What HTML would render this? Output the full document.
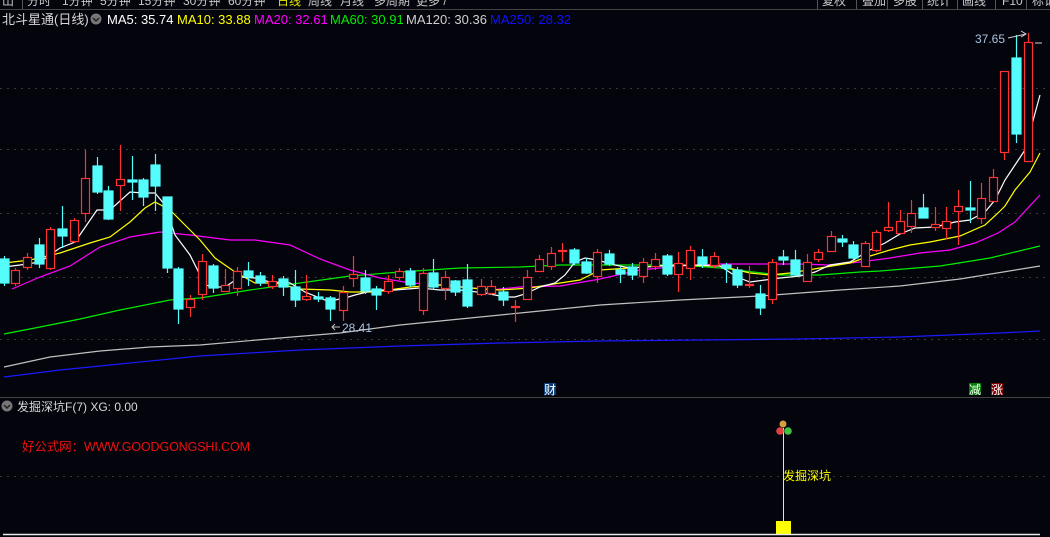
<!DOCTYPE html>
<html><head><meta charset="utf-8"><style>
html,body{margin:0;padding:0;background:#04040c;width:1050px;height:537px;overflow:hidden}
svg{display:block}
text{font-family:"Liberation Sans","Noto Sans CJK SC",sans-serif}
</style></head><body>
<svg width="1050" height="537" viewBox="0 0 1050 537" xmlns="http://www.w3.org/2000/svg">
<rect width="1050" height="537" fill="#04040c"/>
<g font-size="12" fill="#c8c8c8">
<text x="2" y="5">山</text>
<text x="27" y="5">分时</text><text x="62" y="5">1分钟</text><text x="100" y="5">5分钟</text><text x="138" y="5">15分钟</text><text x="183" y="5">30分钟</text><text x="228" y="5">60分钟</text><text x="277" y="5" fill="#e8e800">日线</text><text x="308" y="5">周线</text><text x="340" y="5">月线</text><text x="374" y="5">多周期</text><text x="416" y="5">更多 /</text>
<text x="822" y="5">复权</text><text x="862" y="5">叠加</text><text x="893" y="5">多股</text><text x="927" y="5">统计</text><text x="962" y="5">画线</text><text x="1002" y="5">F10</text><text x="1032" y="5">标记</text>
</g>
<g stroke="#555" stroke-width="1">
<line x1="22.5" y1="0" x2="22.5" y2="9"/>
<line x1="817.5" y1="0" x2="817.5" y2="9"/><line x1="856.5" y1="0" x2="856.5" y2="9"/><line x1="887.5" y1="0" x2="887.5" y2="9"/><line x1="922.5" y1="0" x2="922.5" y2="9"/><line x1="957.5" y1="0" x2="957.5" y2="9"/><line x1="995.5" y1="0" x2="995.5" y2="9"/><line x1="1026.5" y1="0" x2="1026.5" y2="9"/>
<line x1="0" y1="9.5" x2="1050" y2="9.5" stroke="#444"/>
</g>
<text x="2" y="24" font-size="13" fill="#d8d8d8">北斗星通(日线)</text>
<circle cx="96" cy="19" r="5.5" fill="#777"/><path d="M93 18 L96 21 L99 18" stroke="#222" stroke-width="1.5" fill="none"/>
<g font-size="13">
<text x="107" y="24" fill="#ffffff">MA5: 35.74</text>
<text x="177" y="24" fill="#ffff00">MA10: 33.88</text>
<text x="254" y="24" fill="#ff00ff">MA20: 32.61</text>
<text x="330" y="24" fill="#00ee00">MA60: 30.91</text>
<text x="406" y="24" fill="#d0d0d0">MA120: 30.36</text>
<text x="490" y="24" fill="#1010ff">MA250: 28.32</text>
</g>
<g stroke="#3a3a3a" stroke-dasharray="2,5" stroke-width="1">
<line x1="0" y1="88.5" x2="1050" y2="88.5"/><line x1="0" y1="149.5" x2="1050" y2="149.5"/><line x1="0" y1="213.5" x2="1050" y2="213.5"/><line x1="0" y1="277.5" x2="1050" y2="277.5"/><line x1="0" y1="339.5" x2="1050" y2="339.5"/>
<line x1="0" y1="476.5" x2="1050" y2="476.5"/>
</g>
<g fill="none" stroke-width="1.2">
<polyline stroke="#1a1aff" points="4,377 60,370 120,364 200,356 300,350 400,346 500,343 600,341 700,340 800,339 900,337 1000,333 1040,331"/>
<polyline stroke="#c0c0c0" points="4,367 50,357 100,351 150,347 200,345 280,338 340,333 400,325 460,319 520,313 600,305 680,300 760,296 840,290 900,286 960,279 1040,266"/>
<polyline stroke="#00ee00" points="4,334 40,327 80,319 120,310 170,300 200,298 250,290 300,283 350,276 400,272 460,268 520,267 560,265 600,265 680,265 720,268 745,271 780,275 820,275 860,272 880,271 940,266 990,258 1040,246"/>
<polyline stroke="#ff00ff" points="12,289 40,277 70,266 100,247 130,237 160,232 190,235 230,240 255,240 290,245 320,259 350,270 380,278 410,283 450,285 490,290 520,287 560,286 600,279 640,270 680,266 720,264 760,264 800,264 830,265 860,262 890,258 920,253 950,250 975,243 998,233 1015,222 1040,195"/>
<polyline stroke="#ffff00" points="4,263 30,260 60,253 90,243 110,237 130,222 145,208 155,202 170,210 185,225 200,240 215,258 235,272 255,283 275,283 300,289 330,290 350,292 375,292 410,287 440,285 470,288 500,290 530,288 560,283 580,280 600,270 630,268 670,265 720,266 750,273 770,275 790,273 820,268 850,263 870,256 890,250 910,245 930,242 960,236 985,225 998,213 1005,206 1015,190 1030,172 1040,153"/>
<polyline stroke="#ffffff" points="4,267 20,265 40,262 60,248 75,242 97,210 110,210 130,192 143,193 155,193 165,205 175,235 190,255 205,285 215,287 225,287 240,277 255,278 270,282 290,283 305,292 325,300 335,300 345,298 355,295 375,290 395,290 420,288 440,290 460,290 485,293 505,297 515,297 525,294 540,287 555,283 565,275 575,262 585,258 597,260 615,265 630,268 660,266 700,265 720,266 737,277 750,282 765,280 780,278 800,276 815,272 830,265 850,262 870,250 885,243 900,234 915,228 935,227 955,222 970,220 985,212 995,200 1005,180 1015,165 1025,150 1040,95"/>
</g>
<g stroke="#54fcfc" stroke-width="1.2" fill="#54fcfc">
<line x1="4.5" y1="256" x2="4.5" y2="286"/><rect x="0" y="259" width="9" height="24"/>
<line x1="39.5" y1="238" x2="39.5" y2="268"/><rect x="35" y="245" width="9" height="19"/>
<line x1="62.5" y1="206" x2="62.5" y2="248"/><rect x="58" y="229" width="9" height="7"/>
<line x1="97.5" y1="157" x2="97.5" y2="194"/><rect x="93" y="166" width="9" height="26"/>
<line x1="108.5" y1="186" x2="108.5" y2="220"/><rect x="104" y="191" width="9" height="28"/>
<line x1="132.5" y1="156" x2="132.5" y2="200"/><rect x="128" y="180" width="9" height="2"/>
<line x1="143.5" y1="178" x2="143.5" y2="206"/><rect x="139" y="180" width="9" height="17"/>
<line x1="155.5" y1="154" x2="155.5" y2="211"/><rect x="151" y="165" width="9" height="21"/>
<line x1="167.5" y1="197" x2="167.5" y2="273"/><rect x="163" y="197" width="9" height="71"/>
<line x1="178.5" y1="267" x2="178.5" y2="324"/><rect x="174" y="269" width="9" height="40"/>
<line x1="213.5" y1="264" x2="213.5" y2="293"/><rect x="209" y="266" width="9" height="22"/>
<line x1="248.5" y1="262" x2="248.5" y2="286"/><rect x="244" y="271" width="9" height="6"/>
<line x1="260.5" y1="272" x2="260.5" y2="286"/><rect x="256" y="276" width="9" height="7"/>
<line x1="283.5" y1="276" x2="283.5" y2="296"/><rect x="279" y="279" width="9" height="8"/>
<line x1="295.5" y1="270" x2="295.5" y2="307"/><rect x="291" y="287" width="9" height="13"/>
<line x1="318.5" y1="292" x2="318.5" y2="302"/><rect x="314" y="297" width="9" height="2"/>
<line x1="330.5" y1="296" x2="330.5" y2="321"/><rect x="326" y="298" width="9" height="11"/>
<line x1="365.5" y1="270" x2="365.5" y2="294"/><rect x="361" y="278" width="9" height="13"/>
<line x1="376.5" y1="286" x2="376.5" y2="310"/><rect x="372" y="289" width="9" height="6"/>
<line x1="410.5" y1="268" x2="410.5" y2="287"/><rect x="406" y="271" width="9" height="14"/>
<line x1="433.5" y1="259" x2="433.5" y2="290"/><rect x="429" y="273" width="9" height="14"/>
<line x1="455.5" y1="280" x2="455.5" y2="296"/><rect x="451" y="281" width="9" height="11"/>
<line x1="467.5" y1="264" x2="467.5" y2="308"/><rect x="463" y="280" width="9" height="26"/>
<line x1="503.5" y1="287" x2="503.5" y2="306"/><rect x="499" y="292" width="9" height="8"/>
<line x1="574.5" y1="248" x2="574.5" y2="265"/><rect x="570" y="250" width="9" height="13"/>
<line x1="586.5" y1="258" x2="586.5" y2="274"/><rect x="582" y="262" width="9" height="11"/>
<line x1="609.5" y1="250" x2="609.5" y2="266"/><rect x="605" y="254" width="9" height="10"/>
<line x1="620.5" y1="267" x2="620.5" y2="283"/><rect x="616" y="270" width="9" height="4"/>
<line x1="632.5" y1="263" x2="632.5" y2="280"/><rect x="628" y="267" width="9" height="8"/>
<line x1="667.5" y1="254" x2="667.5" y2="276"/><rect x="663" y="256" width="9" height="18"/>
<line x1="702.5" y1="249" x2="702.5" y2="268"/><rect x="698" y="257" width="9" height="7"/>
<line x1="726.5" y1="263" x2="726.5" y2="283"/><rect x="722" y="265" width="9" height="3"/>
<line x1="737.5" y1="267" x2="737.5" y2="288"/><rect x="733" y="270" width="9" height="15"/>
<line x1="760.5" y1="285" x2="760.5" y2="315"/><rect x="756" y="294" width="9" height="14"/>
<line x1="783.5" y1="250" x2="783.5" y2="265"/><rect x="779" y="257" width="9" height="3"/>
<line x1="795.5" y1="250" x2="795.5" y2="276"/><rect x="791" y="260" width="9" height="15"/>
<line x1="842.5" y1="235" x2="842.5" y2="247"/><rect x="838" y="239" width="9" height="3"/>
<line x1="853.5" y1="241" x2="853.5" y2="261"/><rect x="849" y="245" width="9" height="13"/>
<line x1="923.5" y1="194" x2="923.5" y2="218"/><rect x="919" y="208" width="9" height="10"/>
<line x1="970.5" y1="181" x2="970.5" y2="223"/><rect x="966" y="208" width="9" height="2"/>
<line x1="1016.5" y1="35" x2="1016.5" y2="143"/><rect x="1012" y="58" width="9" height="76"/>
</g>
<g stroke="#ff3232" stroke-width="1.2" fill="#04040c">
<line x1="15.5" y1="268" x2="15.5" y2="286"/><rect x="11.5" y="270.5" width="8" height="13"/>
<line x1="27.5" y1="253" x2="27.5" y2="270"/><rect x="23.5" y="257.5" width="8" height="10"/>
<line x1="50.5" y1="227" x2="50.5" y2="270"/><rect x="46.5" y="229.5" width="8" height="39"/>
<line x1="74.5" y1="218" x2="74.5" y2="243"/><rect x="70.5" y="220.5" width="8" height="21"/>
<line x1="85.5" y1="150" x2="85.5" y2="222"/><rect x="81.5" y="178.5" width="8" height="35"/>
<line x1="120.5" y1="145" x2="120.5" y2="211"/><rect x="116.5" y="179.5" width="8" height="6"/>
<line x1="190.5" y1="295" x2="190.5" y2="317"/><rect x="186.5" y="299.5" width="8" height="8"/>
<line x1="202.5" y1="254" x2="202.5" y2="300"/><rect x="198.5" y="261.5" width="8" height="33"/>
<line x1="225.5" y1="269" x2="225.5" y2="292"/><rect x="221.5" y="285.5" width="8" height="6"/>
<line x1="237.5" y1="267" x2="237.5" y2="296"/><rect x="233.5" y="271.5" width="8" height="17"/>
<line x1="272.5" y1="275" x2="272.5" y2="289"/><rect x="268.5" y="281.5" width="8" height="5"/>
<line x1="306.5" y1="275" x2="306.5" y2="301"/><rect x="302.5" y="296.5" width="8" height="3"/>
<line x1="343.5" y1="286" x2="343.5" y2="321"/><rect x="339.5" y="292.5" width="8" height="18"/>
<line x1="353.5" y1="256" x2="353.5" y2="287"/><rect x="349.5" y="274.5" width="8" height="4"/>
<line x1="388.5" y1="275" x2="388.5" y2="294"/><rect x="384.5" y="281.5" width="8" height="10"/>
<line x1="399.5" y1="268" x2="399.5" y2="280"/><rect x="395.5" y="271.5" width="8" height="6"/>
<line x1="423.5" y1="268" x2="423.5" y2="315"/><rect x="419.5" y="273.5" width="8" height="37"/>
<line x1="445.5" y1="271" x2="445.5" y2="300"/><rect x="441.5" y="277.5" width="8" height="11"/>
<line x1="481.5" y1="279" x2="481.5" y2="296"/><rect x="477.5" y="286.5" width="8" height="8"/>
<line x1="491.5" y1="280" x2="491.5" y2="295"/><rect x="487.5" y="286.5" width="8" height="7"/>
<line x1="515.5" y1="300" x2="515.5" y2="322"/><rect x="511.5" y="306.5" width="8" height="1"/>
<line x1="527.5" y1="270" x2="527.5" y2="300"/><rect x="523.5" y="277.5" width="8" height="22"/>
<line x1="539.5" y1="255" x2="539.5" y2="272"/><rect x="535.5" y="259.5" width="8" height="12"/>
<line x1="551.5" y1="247" x2="551.5" y2="270"/><rect x="547.5" y="253.5" width="8" height="13"/>
<line x1="562.5" y1="243" x2="562.5" y2="262"/><rect x="558.5" y="250.5" width="8" height="1"/>
<line x1="597.5" y1="249" x2="597.5" y2="283"/><rect x="593.5" y="252.5" width="8" height="24"/>
<line x1="643.5" y1="258" x2="643.5" y2="283"/><rect x="639.5" y="262.5" width="8" height="14"/>
<line x1="655.5" y1="253" x2="655.5" y2="270"/><rect x="651.5" y="259.5" width="8" height="7"/>
<line x1="678.5" y1="252" x2="678.5" y2="292"/><rect x="674.5" y="263.5" width="8" height="11"/>
<line x1="690.5" y1="246" x2="690.5" y2="280"/><rect x="686.5" y="250.5" width="8" height="18"/>
<line x1="714.5" y1="252" x2="714.5" y2="268"/><rect x="710.5" y="256.5" width="8" height="9"/>
<line x1="749.5" y1="266" x2="749.5" y2="288"/><rect x="745.5" y="284.5" width="8" height="1"/>
<line x1="772.5" y1="259" x2="772.5" y2="304"/><rect x="768.5" y="262.5" width="8" height="37"/>
<line x1="807.5" y1="254" x2="807.5" y2="281"/><rect x="803.5" y="262.5" width="8" height="19"/>
<line x1="818.5" y1="249" x2="818.5" y2="262"/><rect x="814.5" y="252.5" width="8" height="7"/>
<line x1="831.5" y1="231" x2="831.5" y2="252"/><rect x="827.5" y="236.5" width="8" height="15"/>
<line x1="865.5" y1="241" x2="865.5" y2="266"/><rect x="861.5" y="243.5" width="8" height="23"/>
<line x1="876.5" y1="230" x2="876.5" y2="252"/><rect x="872.5" y="232.5" width="8" height="18"/>
<line x1="888.5" y1="202" x2="888.5" y2="232"/><rect x="884.5" y="227.5" width="8" height="3"/>
<line x1="900.5" y1="210" x2="900.5" y2="234"/><rect x="896.5" y="221.5" width="8" height="12"/>
<line x1="911.5" y1="200" x2="911.5" y2="233"/><rect x="907.5" y="213.5" width="8" height="13"/>
<line x1="935.5" y1="207" x2="935.5" y2="231"/><rect x="931.5" y="224.5" width="8" height="3"/>
<line x1="946.5" y1="207" x2="946.5" y2="239"/><rect x="942.5" y="221.5" width="8" height="7"/>
<line x1="958.5" y1="190" x2="958.5" y2="245"/><rect x="954.5" y="206.5" width="8" height="5"/>
<line x1="981.5" y1="183" x2="981.5" y2="224"/><rect x="977.5" y="198.5" width="8" height="20"/>
<line x1="993.5" y1="169" x2="993.5" y2="202"/><rect x="989.5" y="177.5" width="8" height="24"/>
<line x1="1004.5" y1="71" x2="1004.5" y2="160"/><rect x="1000.5" y="71.5" width="8" height="81"/>
<line x1="1028.5" y1="33" x2="1028.5" y2="161"/><rect x="1024.5" y="42.5" width="8" height="119"/>
</g>
<text x="975" y="43" font-size="12" fill="#a8c4e0">37.65</text>
<path d="M1008 38 L1026 34 M1021 31 L1026 34 L1021 37" stroke="#d0d0d0" fill="none" stroke-width="1"/>
<line x1="1035" y1="43" x2="1042" y2="43" stroke="#d0d0d0"/>
<path d="M340 327 L332 327 M335 324 L332 327 L335 330" stroke="#c0c0c0" fill="none"/>
<text x="342" y="332" font-size="12" fill="#a8c4e0">28.41</text>
<rect x="544" y="383" width="12" height="12" fill="#0a3c78"/><text x="544" y="394" font-size="12" fill="#fff">财</text>
<rect x="969" y="383" width="12" height="12" fill="#008000"/><text x="969" y="394" font-size="12" fill="#fff">减</text>
<rect x="991" y="383" width="12" height="12" fill="#800000"/><text x="991" y="394" font-size="12" fill="#fff">涨</text>
<line x1="0" y1="397.5" x2="1050" y2="397.5" stroke="#444"/>
<circle cx="7" cy="406" r="5.5" fill="#777"/><path d="M4 405 L7 408 L10 405" stroke="#222" stroke-width="1.5" fill="none"/>
<text x="17" y="411" font-size="12" fill="#d8d8d8">发掘深坑F(7)  XG: 0.00</text>
<text x="22" y="451" font-size="12.5" fill="#ee1010" textLength="228">好公式网：WWW.GOODGONGSHI.COM</text>
<line x1="783.5" y1="428" x2="783.5" y2="522" stroke="#ffff00" stroke-width="1"/>
<circle cx="783" cy="424" r="3.5" fill="#d4a040"/>
<circle cx="780" cy="431" r="3.8" fill="#e04040"/>
<circle cx="788" cy="431" r="3.8" fill="#40c040"/>
<text x="783" y="480" font-size="12" fill="#ffff00">发掘深坑</text>
<rect x="776" y="521" width="15" height="13" fill="#ffff00"/>
<line x1="3" y1="534.5" x2="1040" y2="534.5" stroke="#e8e8e8" stroke-width="1.5"/>
</svg>
</body></html>
